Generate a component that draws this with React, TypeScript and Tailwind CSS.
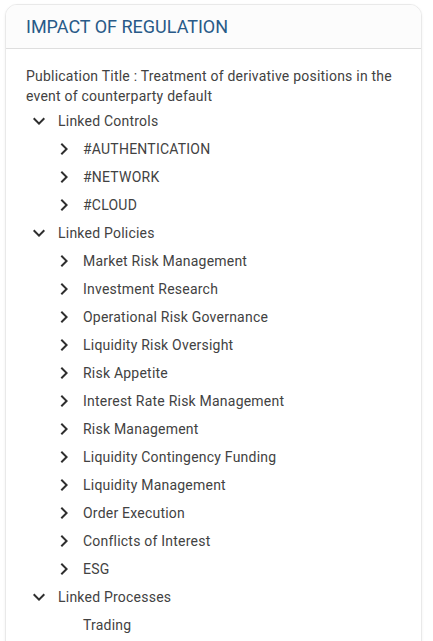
import React from "react";

type Node = { label: string; children?: Node[] };

const tree: Node[] = [
  {
    label: "Linked Controls",
    children: ["#AUTHENTICATION", "#NETWORK", "#CLOUD"].map((label) => ({ label, children: [] })),
  },
  {
    label: "Linked Policies",
    children: [
      "Market Risk Management",
      "Investment Research",
      "Operational Risk Governance",
      "Liquidity Risk Oversight",
      "Risk Appetite",
      "Interest Rate Risk Management",
      "Risk Management",
      "Liquidity Contingency Funding",
      "Liquidity Management",
      "Order Execution",
      "Conflicts of Interest",
      "ESG",
    ].map((label) => ({ label, children: [] })),
  },
  {
    label: "Linked Processes",
    children: [{ label: "Trading" }],
  },
];

function Chevron({ open }: { open: boolean }) {
  return (
    <svg viewBox="0 0 24 24" className="h-6 w-6 fill-[#2f2f2f]" aria-hidden="true">
      {open ? (
        <path d="M16.59 8.59L12 13.17 7.41 8.59 6 10l6 6 6-6z" />
      ) : (
        <path d="M8.59 16.59L13.17 12 8.59 7.41 10 6l6 6-6 6z" />
      )}
    </svg>
  );
}

function TreeRow({ node, depth }: { node: Node; depth: number }) {
  const hasToggle = node.children !== undefined;
  const open = !!node.children && node.children.length > 0;
  return (
    <li>
      <div className={`flex h-7 items-center gap-[7px] ${depth === 0 ? "pl-[1px]" : "pl-[26px]"}`}>
        <span className="flex h-6 w-6 shrink-0 items-center justify-center">
          {hasToggle && <Chevron open={open} />}
        </span>
        <span className="whitespace-nowrap">{node.label}</span>
      </div>
      {open && (
        <ul>
          {node.children!.map((c) => (
            <TreeRow key={c.label} node={c} depth={depth + 1} />
          ))}
        </ul>
      )}
    </li>
  );
}

export default function App() {
  return (
    <div className="min-h-screen bg-white pl-[5px] pr-[11px] pt-1 font-['Roboto','Liberation_Sans',sans-serif]">
      <div className="overflow-hidden rounded-t-xl border border-[#e9e9e9] bg-white shadow-[0_1px_3px_rgba(0,0,0,0.06)]">
        <div className="flex h-[44px] items-center border-b border-[#dedede] bg-[#fcfcfc] pl-5">
          <h2 className="text-[18px] font-normal text-[#285a88]">IMPACT OF REGULATION</h2>
        </div>
        <div className="pb-6 pl-5 pr-4 pt-[17px] text-[14px] leading-5 tracking-[0.22px] text-[#424242]">
          <p>Publication Title : Treatment of derivative positions in the event of counterparty default</p>
          <ul className="mt-[1px]">
            {tree.map((n) => (
              <TreeRow key={n.label} node={n} depth={0} />
            ))}
          </ul>
        </div>
      </div>
    </div>
  );
}
